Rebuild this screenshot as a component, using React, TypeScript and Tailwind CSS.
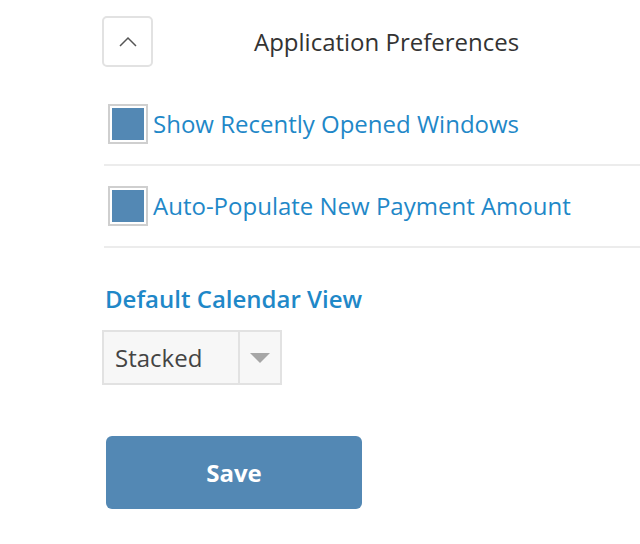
import React from "react";

function Check({ label }: { label: string }) {
  return (
    <div className="ml-[2px] flex items-center h-[82px] border-b-2 border-[#ececec]">
      <div className="ml-[4px] w-[40px] h-[40px] border-2 border-[#cfcfcf] p-[2px] bg-white shrink-0">
        <div className="w-full h-full bg-[#5388b4]" />
      </div>
      <span className="ml-[5px] text-[24px] leading-[32px] text-[#1f88c8]">{label}</span>
    </div>
  );
}

export default function App() {
  return (
    <div
      className="w-[640px] h-[544px] bg-white pl-[102px] pt-[16px]"
      style={{ fontFamily: '"Open Sans", "Noto Sans", sans-serif' }}
    >
      <div className="flex items-center h-[51px]">
        <button className="w-[51px] h-[51px] border-2 border-[#e2e2e2] rounded-[5px] flex items-center justify-center bg-white">
          <svg width="20" height="12" viewBox="0 0 20 12" fill="none">
            <path d="M2 10 L10 2 L18 10" stroke="#555" strokeWidth="1.5" />
          </svg>
        </button>
        <h1 className="ml-[101px] text-[24px] leading-[32px] text-[#333]">Application Preferences</h1>
      </div>
      <div className="mt-[17px]">
        <Check label="Show Recently Opened Windows" />
        <Check label="Auto-Populate New Payment Amount" />
      </div>
      <div className="mt-[35px] ml-[3px] text-[24px] leading-[32px] font-semibold text-[#1f88c8]">
        Default Calendar View
      </div>
      <div className="mt-[15px] w-[180px] h-[55px] border-2 border-[#e2e2e2] bg-[#f7f7f7] flex">
        <div className="flex-1 flex items-center pl-[11px] text-[24px] text-[#444]">Stacked</div>
        <div className="w-[42px] border-l-2 border-[#e2e2e2] flex items-center justify-center">
          <svg width="20" height="10" viewBox="0 0 20 10">
            <path d="M0 0 L20 0 L10 10 Z" fill="#a6a6a6" />
          </svg>
        </div>
      </div>
      <button className="mt-[51px] ml-[4px] w-[256px] h-[73px] rounded-[6px] bg-[#5388b4] text-white text-[24px] font-bold">
        Save
      </button>
    </div>
  );
}
